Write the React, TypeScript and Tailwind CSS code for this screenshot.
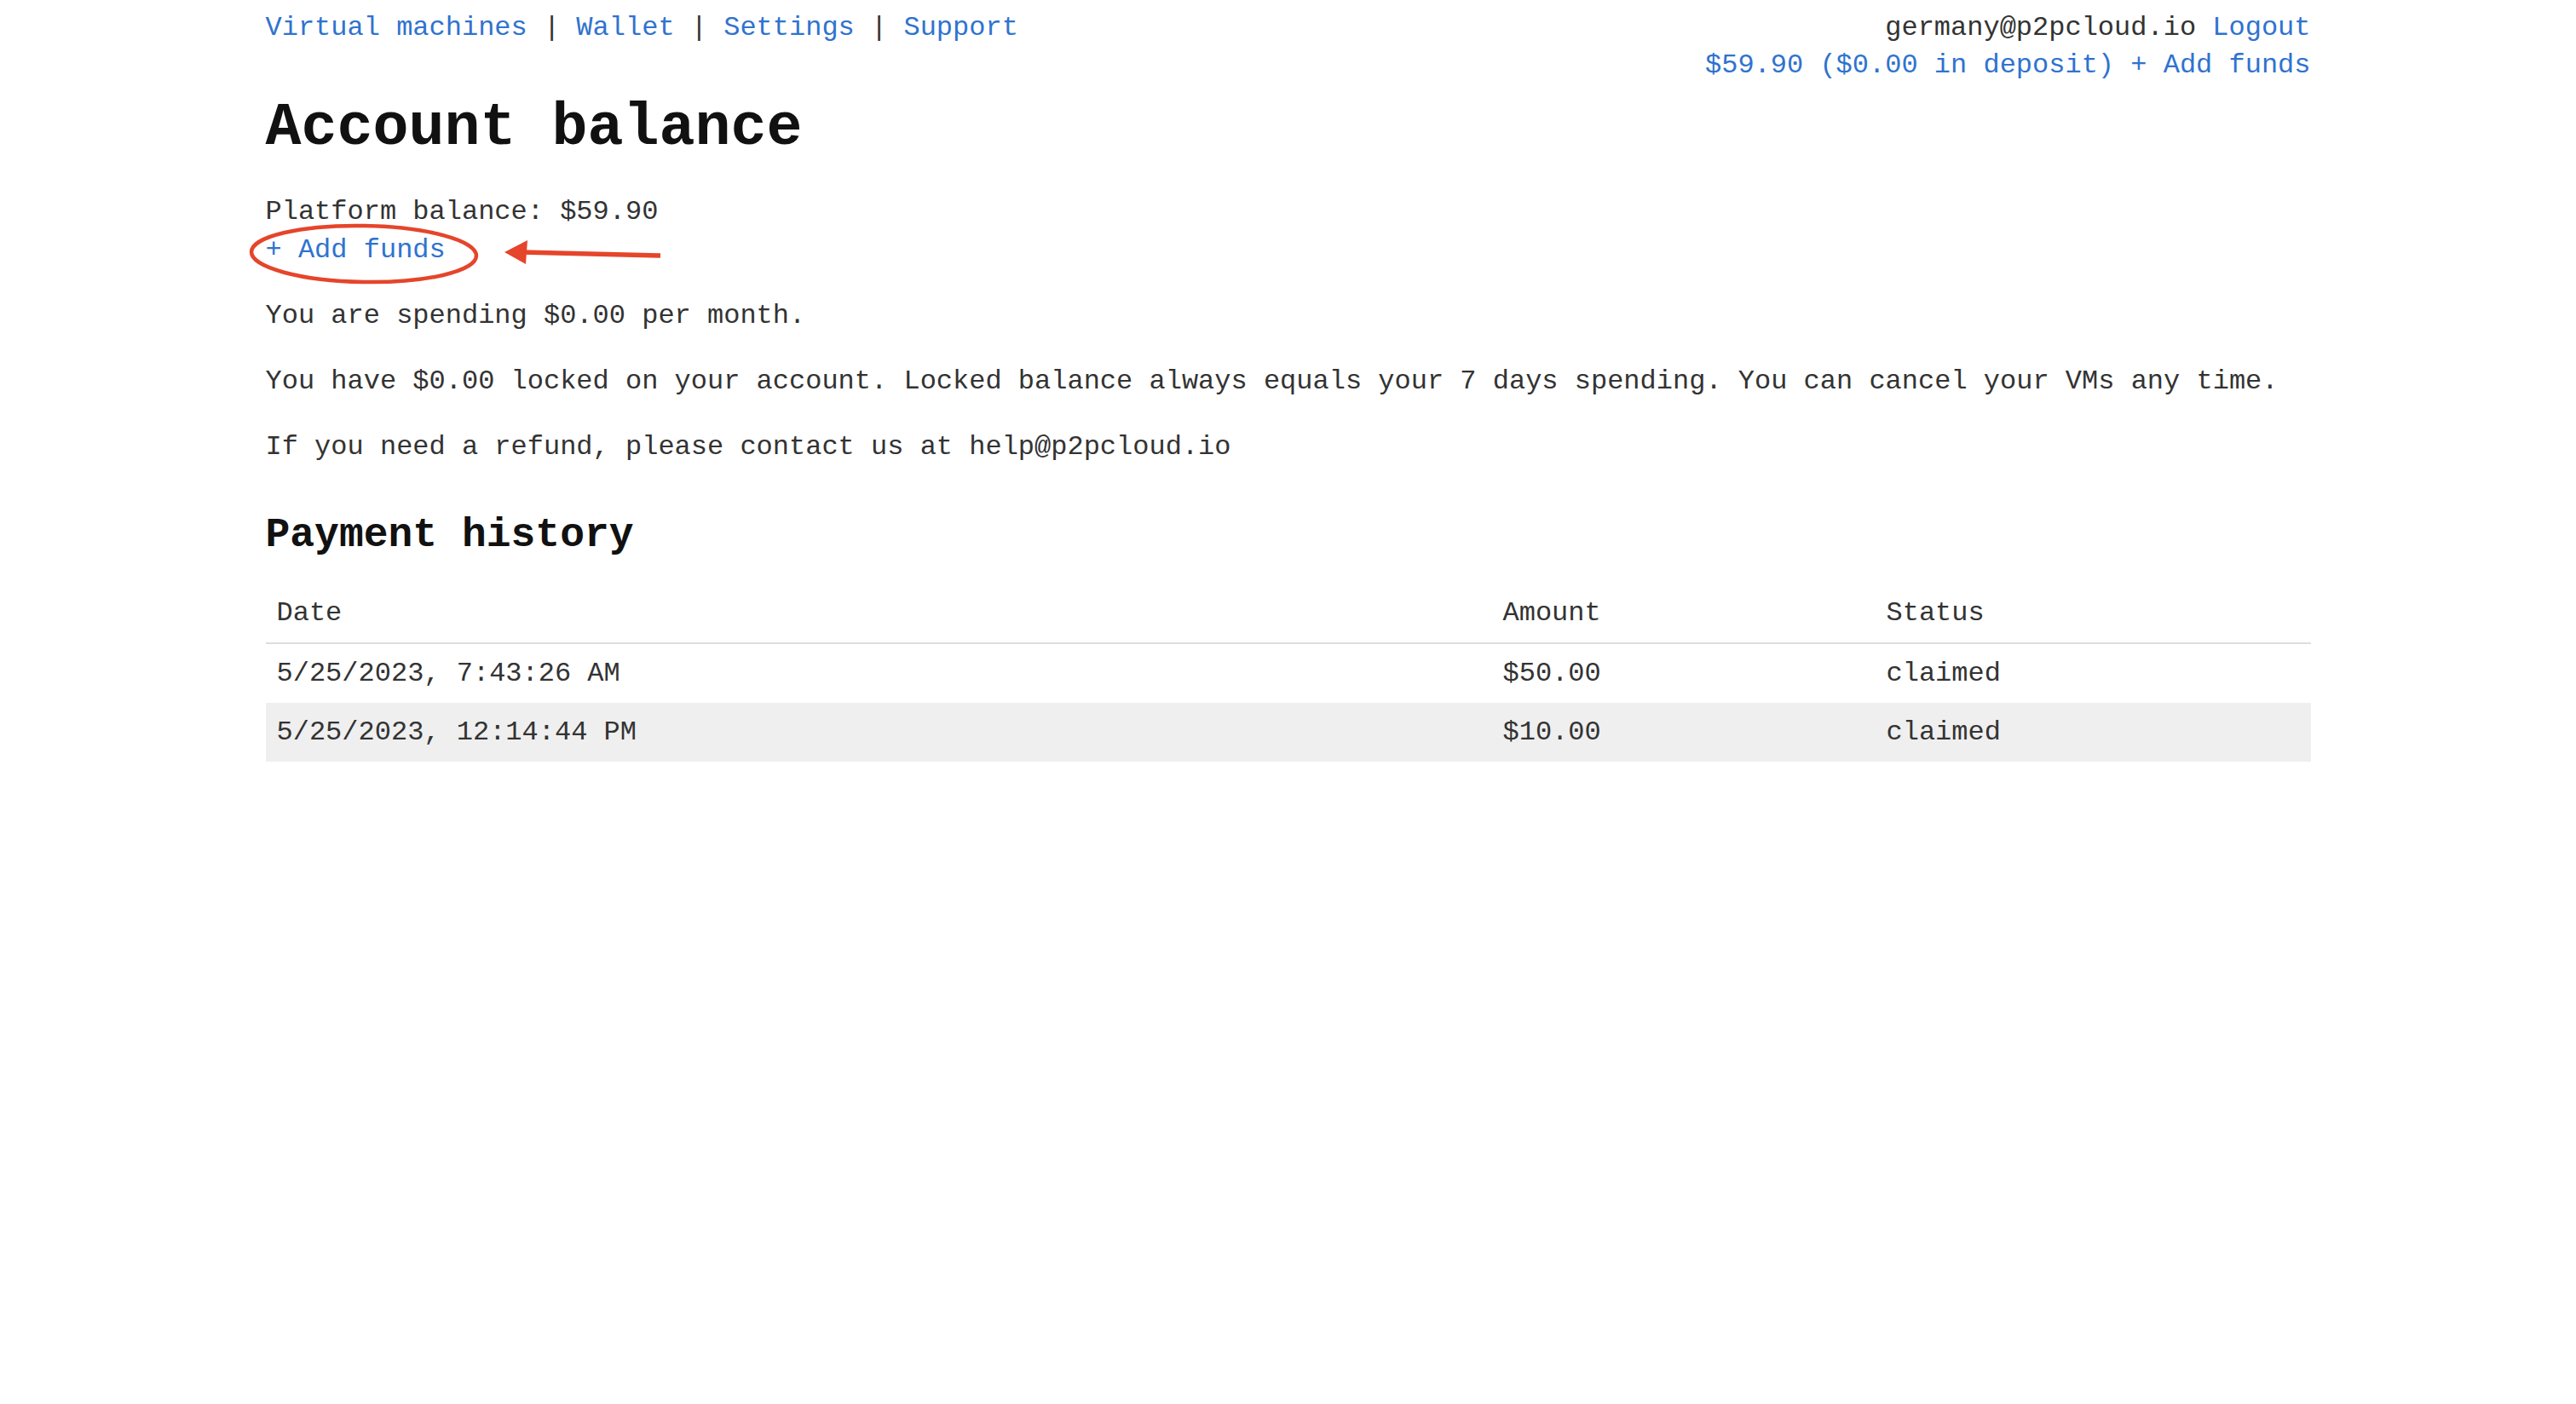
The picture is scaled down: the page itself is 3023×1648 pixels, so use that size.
import React from "react";

const mono = { fontFamily: '"Liberation Mono", "Courier New", monospace' };

export default function App() {
  const rows = [
    { date: "5/25/2023, 7:43:26 AM", amount: "$50.00", status: "claimed" },
    { date: "5/25/2023, 12:14:44 PM", amount: "$10.00", status: "claimed" },
  ];
  return (
    <div
      className="relative min-h-[1648px] w-full bg-white text-[32px] leading-[45px] text-[#333]"
      style={mono}
    >
      <div className="mx-auto w-[2400px]">
        <header className="flex justify-between pt-[11px]">
          <nav className="whitespace-pre leading-[44px]">
            <a href="#" className="text-[#2f73cf]">Virtual machines</a>
            <span>{" | "}</span>
            <a href="#" className="text-[#2f73cf]">Wallet</a>
            <span>{" | "}</span>
            <a href="#" className="text-[#2f73cf]">Settings</a>
            <span>{" | "}</span>
            <a href="#" className="text-[#2f73cf]">Support</a>
          </nav>
          <div className="flex flex-col items-end whitespace-pre leading-[44px]">
            <div>
              <span>germany@p2pcloud.io </span>
              <a href="#" className="text-[#2f73cf]">Logout</a>
            </div>
            <div>
              <a href="#" className="text-[#2f73cf]">$59.90 ($0.00 in deposit)</a>
              <span> </span>
              <a href="#" className="text-[#2f73cf]">+ Add funds</a>
            </div>
          </div>
        </header>

        <h1 className="mt-[12px] text-[70px] font-bold leading-[80px] text-[#111]">
          Account balance
        </h1>

        <div className="mt-[35px]">
          <div>Platform balance: $59.90</div>
          <div>
            <a href="#" className="text-[#2f73cf]">+ Add funds</a>
          </div>
        </div>

        <p className="mt-[32px]">You are spending $0.00 per month.</p>
        <p className="mt-[32px]">
          You have $0.00 locked on your account. Locked balance always equals your 7 days spending. You can cancel your VMs any time.
        </p>
        <p className="mt-[32px]">If you need a refund, please contact us at help@p2pcloud.io</p>

        <h2 className="mt-[53px] text-[48px] font-bold leading-[56px] text-[#111]">
          Payment history
        </h2>

        <table className="mt-[29px] w-full border-collapse table-fixed">
          <colgroup>
            <col className="w-[1439px]" />
            <col className="w-[450px]" />
            <col />
          </colgroup>
          <thead>
            <tr className="border-b-2 border-[#dddddd]">
              <th className="h-[69px] px-[13px] py-[12px] text-left font-normal">Date</th>
              <th className="h-[69px] px-[13px] py-[12px] text-left font-normal">Amount</th>
              <th className="h-[69px] px-[13px] py-[12px] text-left font-normal">Status</th>
            </tr>
          </thead>
          <tbody>
            {rows.map((r, i) => (
              <tr key={i} className={i % 2 === 1 ? "bg-[#efefef]" : "bg-white"}>
                <td className="h-[69px] px-[13px] py-[12px]">{r.date}</td>
                <td className="h-[69px] px-[13px] py-[12px]">{r.amount}</td>
                <td className="h-[69px] px-[13px] py-[12px]">{r.status}</td>
              </tr>
            ))}
          </tbody>
        </table>
      </div>

      <svg
        className="pointer-events-none absolute left-0 top-0"
        width="3023"
        height="400"
        viewBox="0 0 3023 400"
      >
        <ellipse
          cx="427"
          cy="298"
          rx="132"
          ry="33"
          fill="none"
          stroke="#e5452b"
          strokeWidth="4.5"
          transform="rotate(1 427 298)"
        />
        <path d="M775 300 L612 296" stroke="#e5452b" strokeWidth="5.5" strokeLinecap="butt" fill="none" />
        <path d="M592 296 L619 282 L617 310 Z" fill="#e5452b" />
      </svg>
    </div>
  );
}
